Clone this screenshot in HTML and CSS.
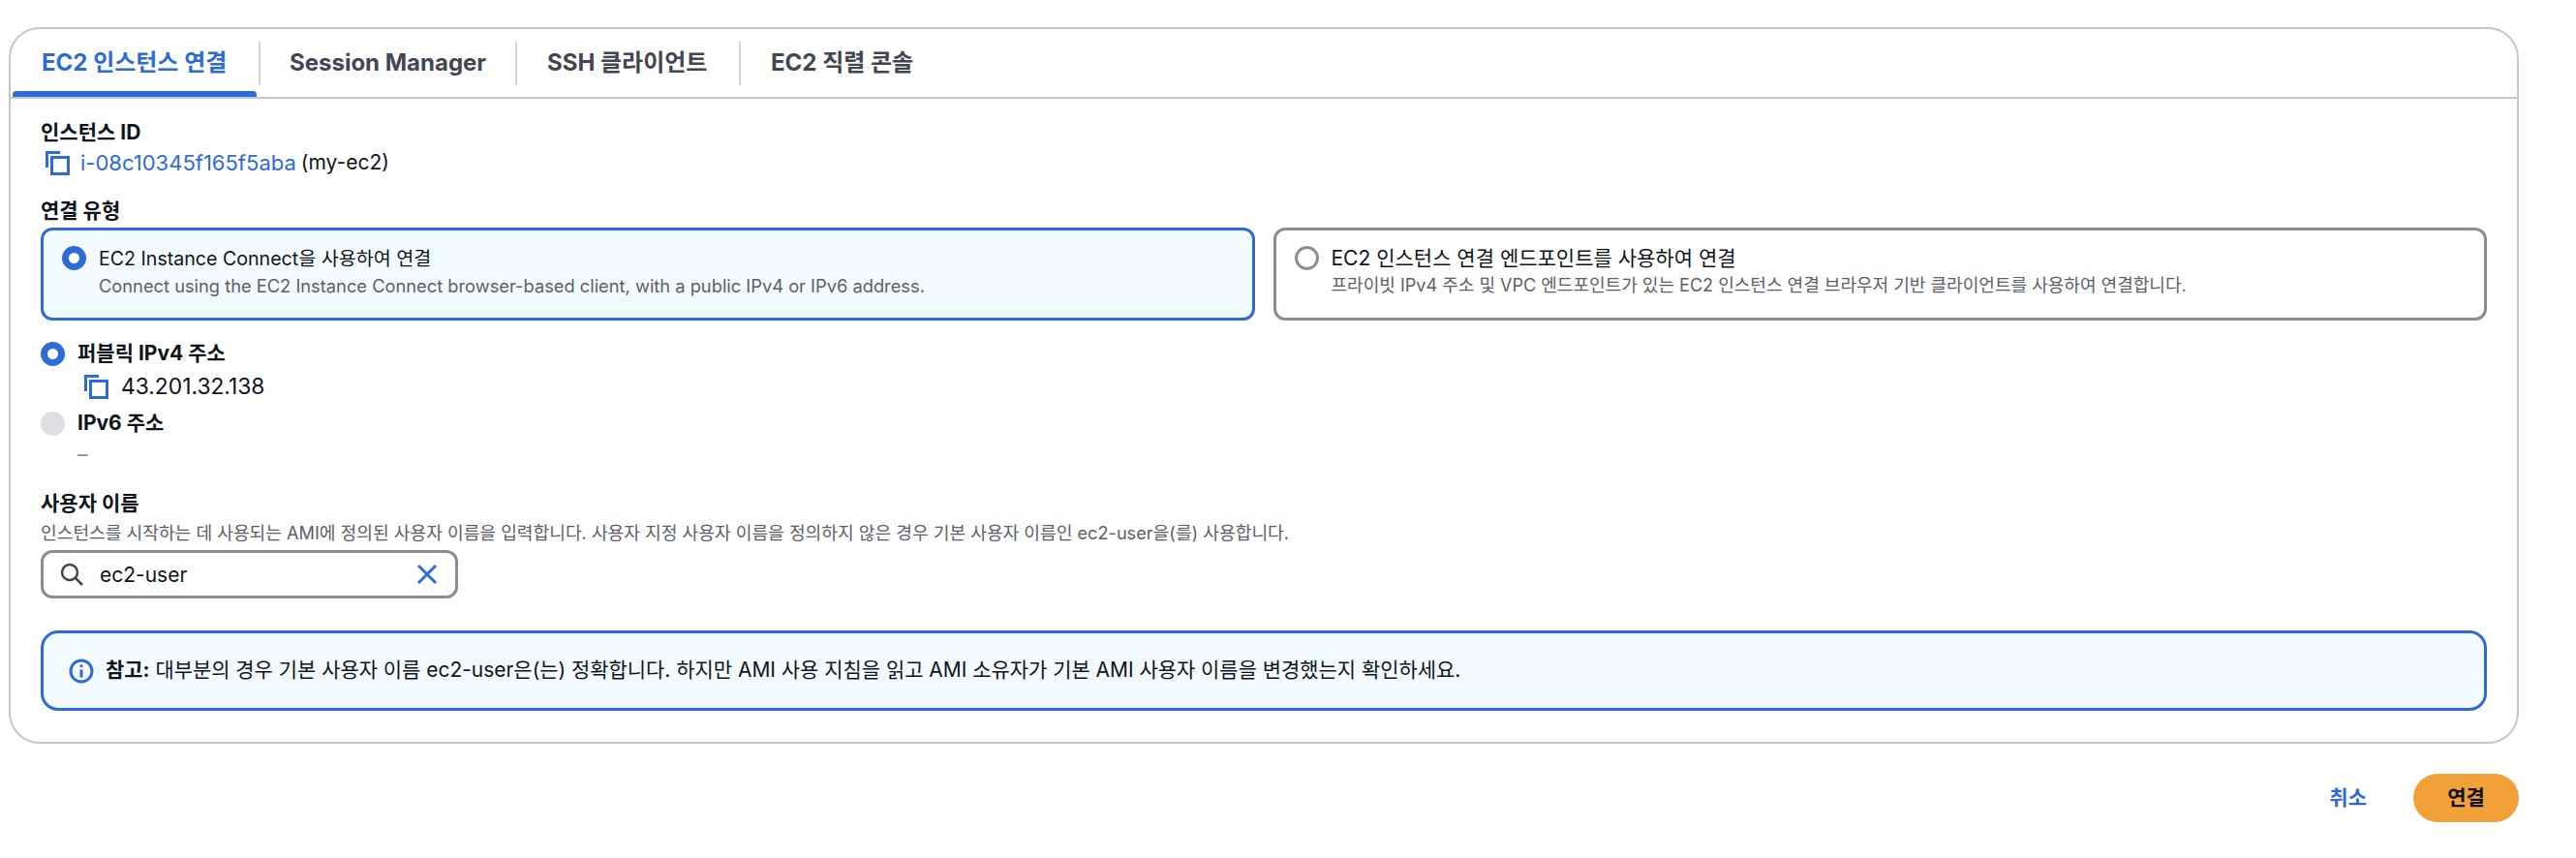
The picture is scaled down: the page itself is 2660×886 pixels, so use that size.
FILE: index.html
```html
<!DOCTYPE html>
<html lang="ko">
<head>
<meta charset="utf-8">
<title>인스턴스에 연결</title>
<link rel="stylesheet" href="styles.css">
</head>
<body>
<main class="page">
  <section class="panel">
    <nav class="tabs">
      <div class="tab tab-active">EC2 인스턴스 연결</div>
      <div class="tab tab-b">Session Manager</div>
      <div class="tab tab-c">SSH 클라이언트</div>
      <div class="tab tab-d">EC2 직렬 콘솔</div>
    </nav>
    <div class="content">
      <div class="label">인스턴스 ID</div>
      <div class="id-row">
        <svg class="copy copy-id" viewBox="0 0 25 25"><path d="M1.5 17V1.5H15" /><path d="M6.5 6.5h17v17h-17z" /></svg>
        <span class="link">i-08c10345f165f5aba</span> <span class="id-name">(my-ec2)</span>
      </div>
      <div class="label label-type">연결 유형</div>
      <div class="choices">
        <div class="choice choice-on">
          <span class="radio radio-on"></span>
          <div>
            <div class="choice-title">EC2 Instance Connect을 사용하여 연결</div>
            <div class="choice-desc choice-desc-en">Connect using the EC2 Instance Connect browser-based client, with a public IPv4 or IPv6 address.</div>
          </div>
        </div>
        <div class="choice">
          <span class="radio radio-off"></span>
          <div>
            <div class="choice-title choice-title-ko">EC2 인스턴스 연결 엔드포인트를 사용하여 연결</div>
            <div class="choice-desc">프라이빗 IPv4 주소 및 VPC 엔드포인트가 있는 EC2 인스턴스 연결 브라우저 기반 클라이언트를 사용하여 연결합니다.</div>
          </div>
        </div>
      </div>
      <div class="addr addr-first">
        <span class="radio radio-on"></span>
        <span class="addr-name">퍼블릭 IPv4 주소</span>
      </div>
      <div class="ip-row">
        <svg class="copy" viewBox="0 0 25 25"><path d="M1.5 17V1.5H15" /><path d="M6.5 6.5h17v17h-17z" /></svg>
        <span>43.201.32.138</span>
      </div>
      <div class="addr">
        <span class="radio radio-dis"></span>
        <span class="addr-name">IPv6 주소</span>
      </div>
      <div class="dash">–</div>
      <div class="label label-user">사용자 이름</div>
      <div class="hint">인스턴스를 시작하는 데 사용되는 AMI에 정의된 사용자 이름을 입력합니다. 사용자 지정 사용자 이름을 정의하지 않은 경우 기본 사용자 이름인 ec2-user을(를) 사용합니다.</div>
      <div class="search">
        <svg class="search-icon" viewBox="0 0 24 24"><circle cx="10" cy="10" r="8" /><path d="M16 16l7 7" /></svg>
        <span class="search-text">ec2-user</span>
        <svg class="clear-icon" viewBox="0 0 22 22"><path d="M2 2l18 18M20 2L2 20" /></svg>
      </div>
      <div class="note">
        <svg class="info" viewBox="0 0 26 26"><circle cx="13" cy="13" r="11" /><path d="M13 11.5v8" /><path class="dot" d="M13 6.5v2.6" /></svg>
        <p class="note-text"><b>참고:</b> 대부분의 경우 기본 사용자 이름 ec2-user은(는) 정확합니다. 하지만 AMI 사용 지침을 읽고 AMI 소유자가 기본 AMI 사용자 이름을 변경했는지 확인하세요.</p>
      </div>
    </div>
  </section>
  <footer class="actions">
    <span class="cancel">취소</span>
    <span class="connect">연결</span>
  </footer>
</main>
</body>
</html>
```
FILE: styles.css
```css
* { box-sizing: border-box; }
html, body { margin: 0; background: #fff; }
body {
  font-family: "Inter", "Noto Sans CJK KR", sans-serif;
  color: #0f141a;
  font-size: 21px;
  line-height: 30px;
  height: 886px;
  overflow: hidden;
}
.page { padding: 28px 59px 0 9px; }
.panel {
  height: 740px;
  border: 2px solid #c6c6cd;
  border-radius: 32px;
  background: #fff;
}
.tabs {
  display: flex;
  height: 72px;
  border-bottom: 2px solid #c6c6cd;
  padding-top: 13px;
  font-size: 24px;
  font-weight: 700;
  color: #424650;
}
.tab { height: 45px; line-height: 43px; padding-left: 30px; border-left: 2px solid #d5d5da; position: relative; }
.tab-active { width: 256px; padding-left: 32px; border-left: 0; color: #2e6bd6; }
.tab-active::after {
  content: "";
  position: absolute;
  left: 2px;
  top: 51px;
  width: 252px;
  height: 6px;
  background: #2e6bd6;
  border-radius: 4px 4px 0 0;
}
.tab-b { width: 265px; }
.tab-c { width: 231px; padding-left: 31px; }
.tab-d { flex: 1; padding-left: 31px; }
.content { padding: 20px 31px 0 31px; }
.label { font-weight: 700; font-size: 21px; line-height: 30px; }
.link { color: #2e6bd6; }
.copy { width: 25px; height: 25px; fill: none; stroke: #2e6bd6; stroke-width: 3; flex: none; }
.copy-id { margin-right: 6px; }
.id-row { display: flex; align-items: center; gap: 5px; height: 32px; margin-left: 5px; font-size: 22px; white-space: pre; }
.id-name { font-size: 21px; }
.label-type { margin-top: 19px; }
.choices { display: flex; gap: 19px; margin-top: 2px; }
.choice {
  flex: 1 1 0;
  height: 96px;
  border: 3px solid #8c8c94;
  border-radius: 12px;
  display: flex;
  align-items: flex-start;
  padding: 15px 19px;
  gap: 13px;
}
.choice-on { border-color: #2e6bd6; background: #f2fafe; }
.choice-title { font-size: 19.6px; line-height: 28px; }
.choice-title-ko { font-size: 21px; }
.choice-desc { font-size: 18.05px; line-height: 28px; color: #5b6068; }
.choice-desc-en { font-size: 18.3px; }
.radio { width: 25px; height: 25px; border-radius: 50%; flex: none; margin-top: 1px; background: #fff; }
.radio-on { border: 7px solid #2e6bd6; }
.radio-off { border: 3px solid #8c8c94; }
.radio-dis { background: #dedee3; }
.addr { display: flex; align-items: center; gap: 13px; height: 26px; font-weight: 700; }
.addr .radio { margin-top: 0; }
.addr-first { margin-top: 21px; }
.addr-name { font-size: 21px; }
.ip-row { display: flex; align-items: center; gap: 13px; height: 32px; margin: 5px 0 9px 45px; font-size: 22.8px; }
.dash { margin: 5px 0 0 38px; height: 30px; color: #8c8c94; font-size: 21px; }
.label-user { margin-top: 20px; }
.hint { font-size: 18.15px; line-height: 28px; margin-top: 1px; color: #5b6068; white-space: nowrap; }
.search {
  display: flex;
  align-items: center;
  width: 431px;
  height: 50px;
  margin-top: 4px;
  border: 3px solid #8c8c94;
  border-radius: 12px;
  padding: 0 18px 0 17px;
}
.search-icon { width: 24px; height: 24px; fill: none; stroke: #424650; stroke-width: 2.5; flex: none; }
.search-text { flex: 1; margin-left: 17px; font-size: 21px; line-height: 34px; padding-top: 2px; }
.clear-icon { width: 22px; height: 22px; fill: none; stroke: #2e6bd6; stroke-width: 3; flex: none; }
.note {
  display: flex;
  align-items: center;
  gap: 12px;
  height: 83px;
  margin-top: 33px;
  padding-left: 26px;
  border: 3px solid #2e6bd6;
  border-radius: 18px;
  background: #f2fafe;
}
.info { width: 26px; height: 26px; fill: none; stroke: #2e6bd6; stroke-width: 3; flex: none; }
.note-text { margin: 0 0 2px; font-size: 20.95px; }
.actions { display: flex; justify-content: flex-end; align-items: center; gap: 48px; margin-top: 31px; }
.cancel { color: #2e6bd6; font-weight: 700; font-size: 21px; }
.connect {
  display: flex;
  align-items: center;
  justify-content: center;
  width: 109px;
  height: 50px;
  border-radius: 25px;
  background: #f2a03a;
  font-weight: 700;
  font-size: 21px;
}
```
